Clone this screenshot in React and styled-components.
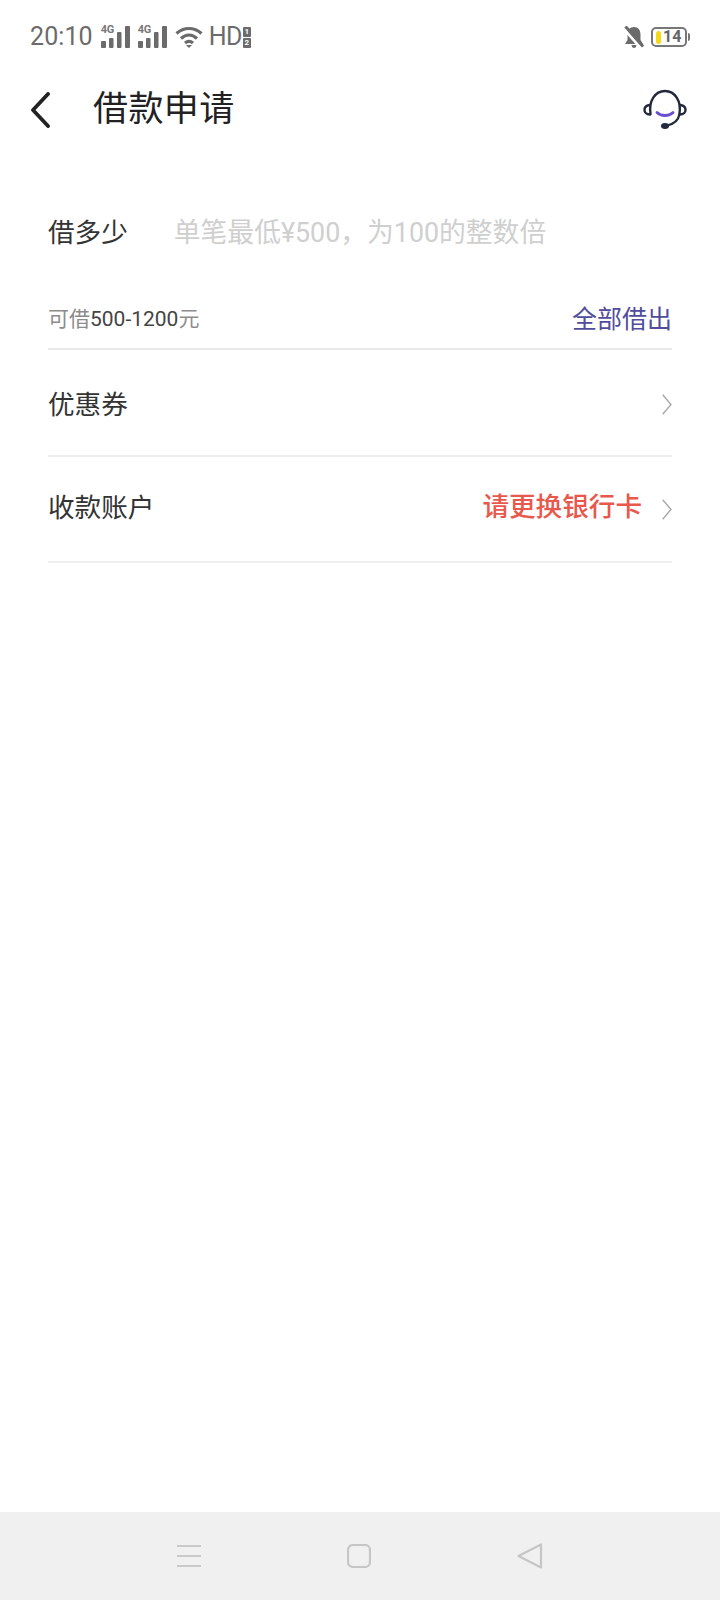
import React from 'react';
import styled, { createGlobalStyle } from 'styled-components';

const GlobalStyle = createGlobalStyle`
	html, body {
		margin: 0;
		padding: 0;
		background: #fff;
		font-family: Roboto, "Noto Sans CJK SC", sans-serif;
	}
`;

const Page = styled.div`
	display: flex;
	flex-direction: column;
	width: 720px;
	height: 1600px;
	background: #fff;
`;

const StatusBar = styled.div`
	display: flex;
	align-items: center;
	justify-content: space-between;
	height: 28px;
	padding: 23px 33px 23px 30px;
	color: #6b6b6b;
`;
const StatusGroup = styled.div`
	display: flex;
	align-items: center;
`;
const Clock = styled.span`
	font-size: 25px;
	line-height: 28px;
	letter-spacing: 0.1px;
	margin-right: 8px;
`;
const HdText = styled.span`
	font-size: 25px;
	line-height: 28px;
	letter-spacing: -0.6px;
	margin-left: 6px;
`;
const SimStack = styled.div`
	display: flex;
	flex-direction: column;
	gap: 1px;
	margin-left: 1px;
`;
const SimBadge = styled.span`
	display: block;
	width: 8px;
	height: 10px;
	border-radius: 1px;
	background: #6b6b6b;
	color: #fff;
	font-size: 8px;
	font-weight: 700;
	line-height: 10px;
	text-align: center;
`;
const SignalBox = styled.div`
	position: relative;
	width: 29px;
	height: 22px;
	margin-right: 8px;
`;
const SignalLabel = styled.span`
	position: absolute;
	left: 0;
	top: -2px;
	font-size: 11px;
	font-weight: 700;
	line-height: 12px;
	letter-spacing: -0.3px;
	color: #777;
`;
const Battery = styled.div`
	position: relative;
	display: flex;
	align-items: center;
	box-sizing: border-box;
	width: 36px;
	height: 20px;
	margin-left: 7px;
	padding-left: 3px;
	border: 2px solid #777;
	border-radius: 5px;
	&::after {
		content: '';
		position: absolute;
		right: -5px;
		top: 4px;
		width: 2px;
		height: 8px;
		background: #777;
		border-radius: 0 2px 2px 0;
	}
`;
const BatteryFill = styled.span`
	width: 5px;
	height: 13px;
	border-radius: 3px;
	background: #f3d916;
`;
const BatteryText = styled.span`
	margin-left: 2px;
	font-size: 16px;
	font-weight: 700;
	line-height: 16px;
	color: #666;
`;

const Header = styled.div`
	display: flex;
	align-items: center;
	height: 72px;
	padding: 0 32px 0 30px;
`;
const BackButton = styled.div`
	display: flex;
	width: 63px;
`;
const Title = styled.h1`
	flex: 1;
	margin: 0;
	font-size: 35px;
	font-weight: 400;
	line-height: 72px;
	letter-spacing: 0.4px;
	color: #222;
`;

const Form = styled.div`
	display: flex;
	flex-direction: column;
	padding: 0 48px;
	margin-top: 60px;
`;
const AmountRow = styled.div`
	display: flex;
	align-items: center;
	height: 54px;
`;
const Label = styled.span`
	font-size: 26.6px;
	line-height: 40px;
	color: #333;
	margin-bottom: ${(p) => (p.$lift ? '2px' : '0')};
`;
const Placeholder = styled.span`
	margin-left: 46px;
	font-size: 26.8px;
	line-height: 40px;
	color: #cfcfcf;
`;
const LimitRow = styled.div`
	display: flex;
	align-items: center;
	justify-content: space-between;
	height: 62px;
	margin-top: 26px;
	border-bottom: 2px solid #e9e9e9;
`;
const LimitText = styled.span`
	font-size: 21px;
	color: #8c8c8c;
	b {
		font-weight: 400;
		color: #444;
	}
`;
const BorrowAll = styled.span`
	font-size: 25px;
	color: #514c9c;
`;
const ListRow = styled.div`
	display: flex;
	align-items: center;
	justify-content: space-between;
	box-sizing: border-box;
	height: ${(p) => p.$height}px;
	padding-top: ${(p) => p.$pushDown || 0}px;
	border-bottom: 2px solid #eeeeee;
`;
const RowRight = styled.div`
	display: flex;
	align-items: center;
	gap: 20px;
`;
const Warning = styled.span`
	font-size: 26.6px;
	font-weight: 500;
	line-height: 40px;
	margin-bottom: 4px;
	color: #e8584d;
`;

const NavBar = styled.div`
	display: flex;
	align-items: center;
	justify-content: center;
	gap: 146px;
	height: 88px;
	margin-top: auto;
	background: #f0f0f0;
`;

const ChevronIcon = () => (
	<svg width="10" height="21" viewBox="0 0 10 21" fill="none" stroke="#a8a8a8" strokeWidth="1.4">
		<path d="M0.7 0.700 L9 10.500 L0.7 20.300" />
	</svg>
);

const SignalIcon = () => (
	<svg width="29" height="22" viewBox="0 0 29 22" fill="#6b6b6b">
		<rect x="0" y="15" width="5" height="7" rx="1" />
		<rect x="8" y="12" width="4.500" height="10" rx="1" />
		<rect x="16" y="6" width="4.500" height="16" rx="1" />
		<rect x="24" y="0" width="5" height="22" rx="1" />
	</svg>
);

const WifiIcon = () => (
	<svg width="28" height="22" viewBox="0 0 28 22" fill="none" stroke="#6b6b6b" strokeWidth="3.200">
		<path d="M1.500 7.500 C9 0.800 19 0.800 26.500 7.500" />
		<path d="M6 12.500 C11 8 17 8 22 12.500" />
		<path d="M10 17 C12.500 15 15.500 15 18 17" />
		<path d="M14 22 L11 19 H17 Z" fill="#6b6b6b" stroke="none" />
	</svg>
);

const MutedBellIcon = () => (
	<svg width="20" height="22" viewBox="0 0 20 22">
		<path d="M10 1 C14.500 1 16.500 4.500 16.500 8.500 V14 L19 18 H1 L3.500 14 V8.500 C3.500 4.500 5.500 1 10 1 Z" fill="#6b6b6b" />
		<path d="M7.500 19 H12.500 C12.300 21 11.300 22 10 22 C8.700 22 7.700 21 7.500 19 Z" fill="#6b6b6b" />
		<path d="M0 3 L17 22" stroke="#fff" strokeWidth="3" />
		<path d="M1.500 0.500 L19 20.500" stroke="#6b6b6b" strokeWidth="3" />
	</svg>
);

const BackIcon = () => (
	<svg width="22" height="36" viewBox="0 0 22 36" fill="none" stroke="#222" strokeWidth="3.800" strokeLinecap="round" strokeLinejoin="round">
		<path d="M18 2 L3 18 L18 34" />
	</svg>
);

const HeadsetIcon = () => (
	<svg width="46" height="42" viewBox="0 0 46 42" fill="none" strokeLinecap="round">
		<path d="M8.500 25 C6.500 12 13 2 23 2 C33 2 39.500 12 37.500 25" stroke="#23283c" strokeWidth="2.400" />
		<path d="M7.500 16 C4 16.500 2.500 18.500 2.500 21 C2.500 23.500 4.500 25.500 8 25.500" stroke="#23283c" strokeWidth="2.400" />
		<path d="M38.500 16 C42 16.500 43.500 18.500 43.500 21 C43.500 23.500 41.500 25.500 38 25.500" stroke="#23283c" strokeWidth="2.400" />
		<path d="M37.500 25 C36.500 31 32 35 25 36.500" stroke="#23283c" strokeWidth="2.200" />
		<ellipse cx="23" cy="37" rx="4" ry="3" fill="#23283c" />
		<path d="M15 23.500 C19 27.500 27 27.500 31 23.500" stroke="#6a4fd0" strokeWidth="2.800" />
	</svg>
);

const MenuIcon = () => (
	<svg width="24" height="24" viewBox="0 0 24 24" stroke="#cacaca" strokeWidth="2">
		<path d="M0 2 H24 M0 12 H24 M0 22 H24" />
	</svg>
);

const HomeIcon = () => (
	<svg width="24" height="24" viewBox="0 0 24 24" fill="none" stroke="#c6c6c6" strokeWidth="2.200">
		<rect x="1" y="1" width="22" height="22" rx="5" />
	</svg>
);

const ReturnIcon = () => (
	<svg width="26" height="26" viewBox="0 0 26 26" fill="none" stroke="#c6c6c6" strokeWidth="2.200" strokeLinejoin="round">
		<path d="M24 1.500 V24.500 L1.500 13 Z" />
	</svg>
);

const Signal = () => (
	<SignalBox>
		<SignalIcon />
		<SignalLabel>4G</SignalLabel>
	</SignalBox>
);

const App = () => (
	<Page>
		<GlobalStyle />
		<StatusBar>
			<StatusGroup>
				<Clock>20:10</Clock>
				<Signal />
				<Signal />
				<WifiIcon />
				<HdText>HD</HdText>
				<SimStack>
					<SimBadge>1</SimBadge>
					<SimBadge>2</SimBadge>
				</SimStack>
			</StatusGroup>
			<StatusGroup>
				<MutedBellIcon />
				<Battery>
					<BatteryFill />
					<BatteryText>14</BatteryText>
				</Battery>
			</StatusGroup>
		</StatusBar>
		<Header>
			<BackButton>
				<BackIcon />
			</BackButton>
			<Title>借款申请</Title>
			<HeadsetIcon />
		</Header>
		<Form>
			<AmountRow>
				<Label>借多少</Label>
				<Placeholder>单笔最低¥500，为100的整数倍</Placeholder>
			</AmountRow>
			<LimitRow>
				<LimitText>
					可借<b>500-1200</b>元
				</LimitText>
				<BorrowAll>全部借出</BorrowAll>
			</LimitRow>
			<ListRow $height={107} $pushDown={4}>
				<Label>优惠券</Label>
				<ChevronIcon />
			</ListRow>
			<ListRow $height={106}>
				<Label $lift>收款账户</Label>
				<RowRight>
					<Warning>请更换银行卡</Warning>
					<ChevronIcon />
				</RowRight>
			</ListRow>
		</Form>
		<NavBar>
			<MenuIcon />
			<HomeIcon />
			<ReturnIcon />
		</NavBar>
	</Page>
);

export default App;
